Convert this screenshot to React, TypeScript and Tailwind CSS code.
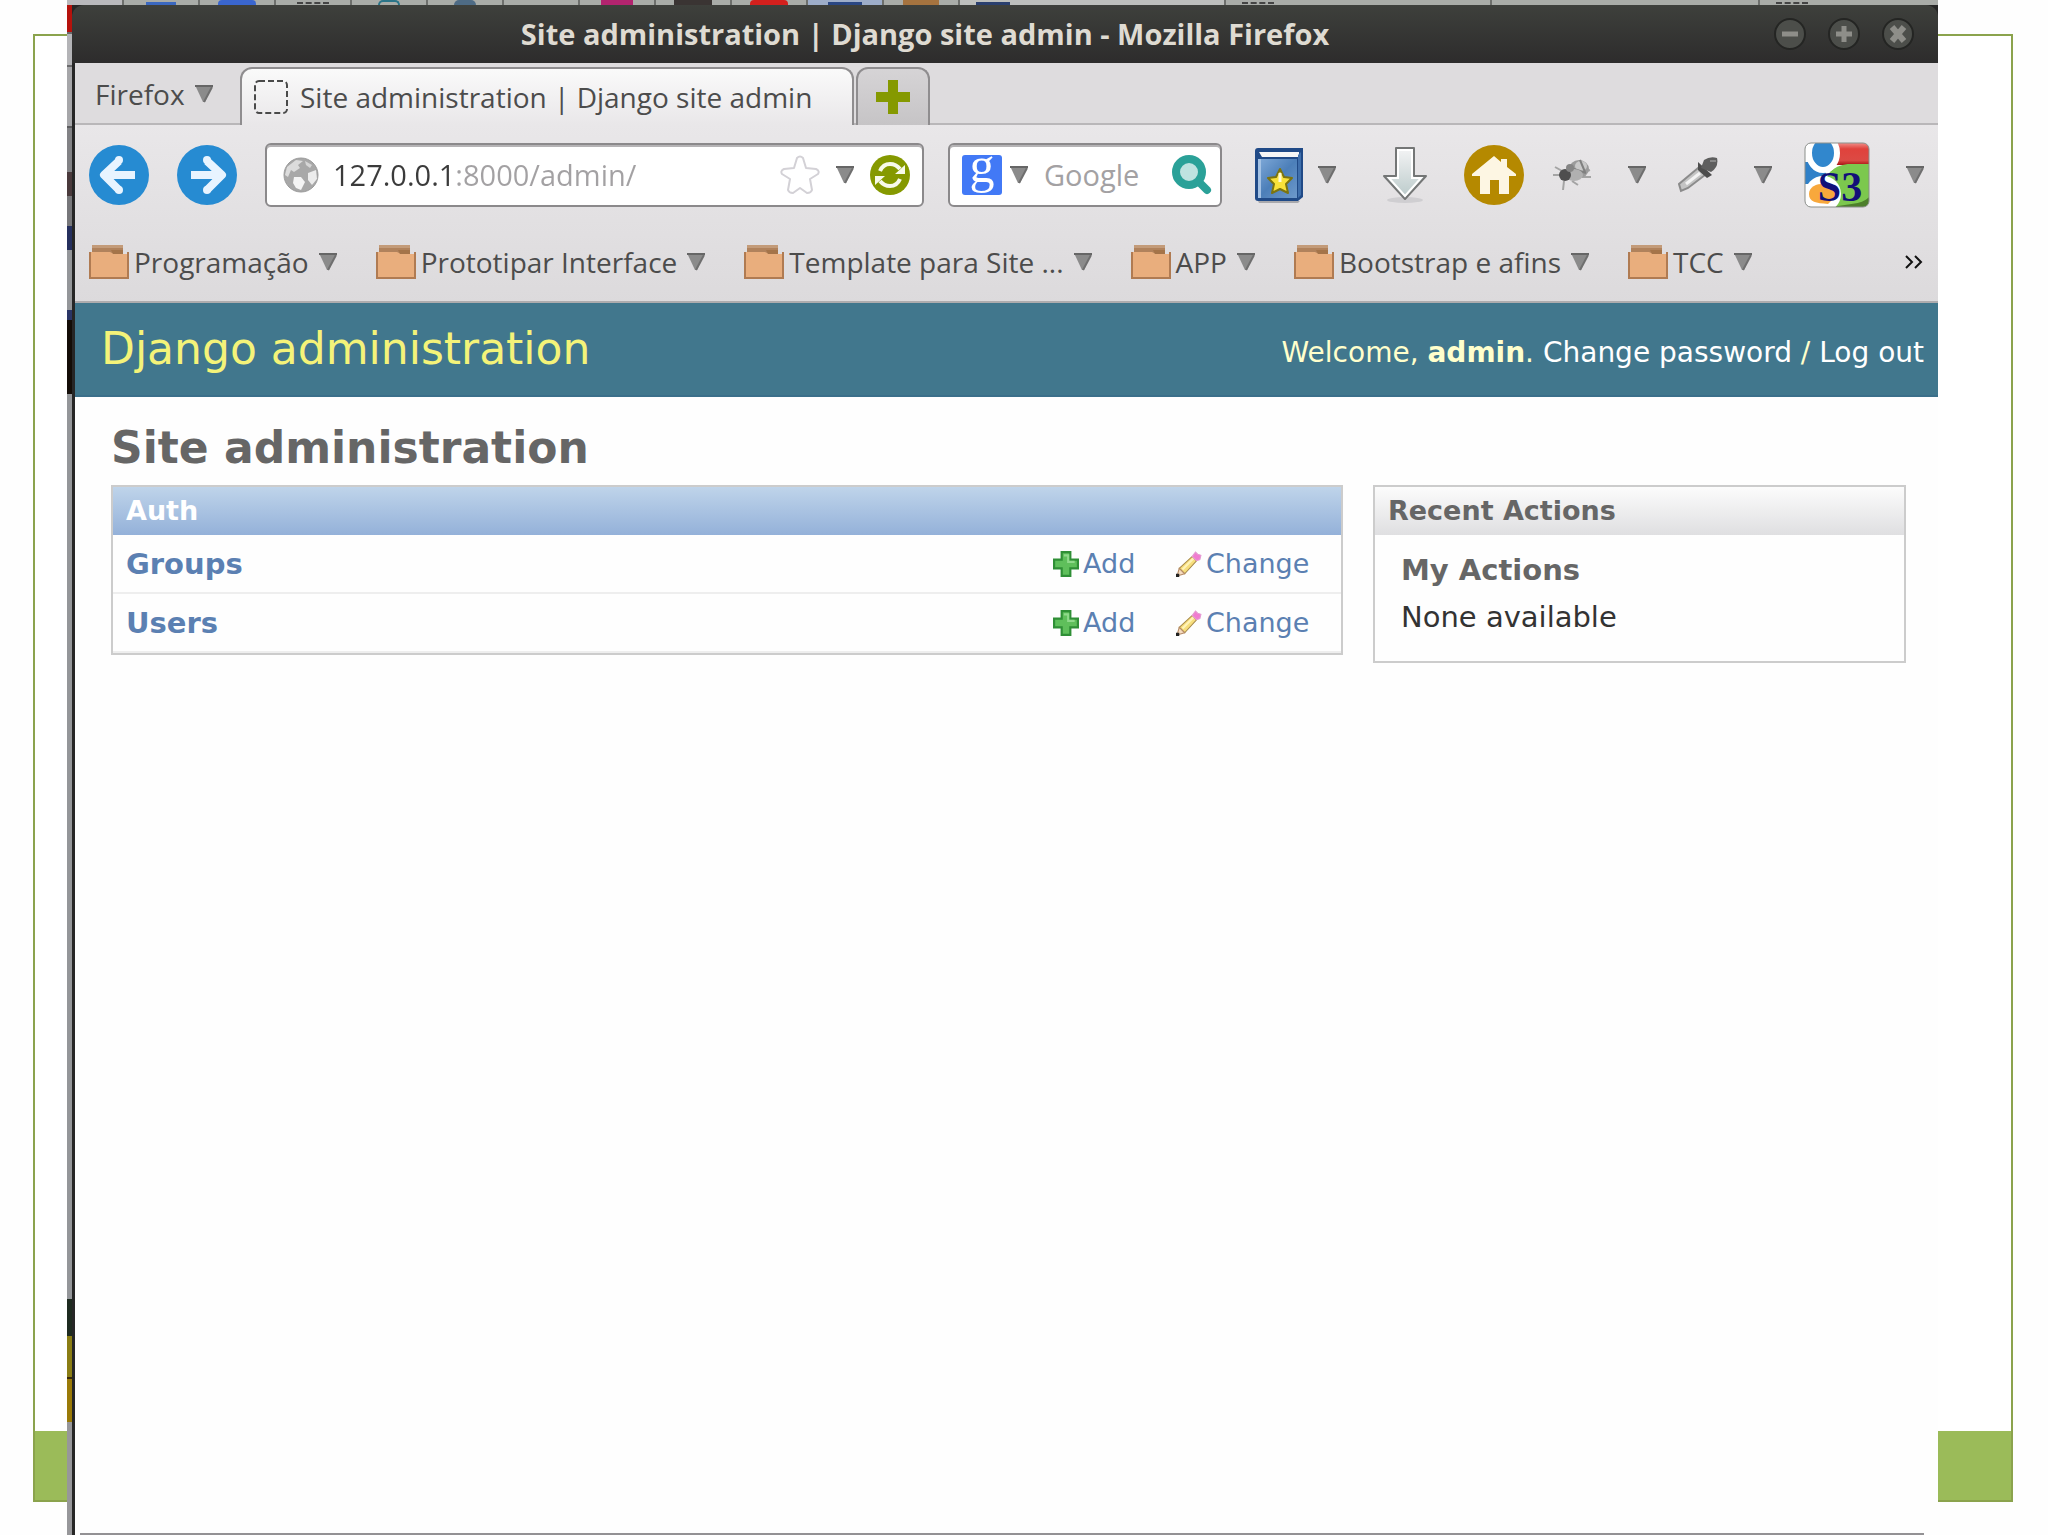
import React from 'react';

interface IconProps {
  className?: string;
}

const bookmarks = ['Programação', 'Prototipar Interface', 'Template para Site ...', 'APP', 'Bootstrap e afins', 'TCC'];

const models = ['Groups', 'Users'];

const Triangle: React.FC = () => (
  <svg viewBox="0 0 18 18" className="w-[18px] h-[18px] shrink-0" aria-hidden="true">
    <path d="M0 0H18L10 17H8Z" fill="#8b8b8b" />
    <path d="M0 0H18V2H0Z" fill="#666" />
    <path d="M17 2L9 17" stroke="#6f6f6f" strokeWidth="2" />
  </svg>
);

const ArrowCircle: React.FC<{ flip?: boolean }> = ({ flip = false }) => (
  <svg viewBox="0 0 60 60" className="w-[60px] h-[60px]" aria-hidden="true">
    <circle cx="30" cy="30" r="30" fill="#268bd2" />
    <path
      d={flip ? 'M14 30H46M30 16L45 30L30 45' : 'M46 30H14M30 16L15 30L30 45'}
      fill="none"
      stroke="#e8f4ff"
      strokeWidth="8"
      strokeLinecap="butt"
      strokeLinejoin="round"
    />
    <circle cx="30" cy="15" r="4" fill="#e8f4ff" />
    <circle cx="30" cy="45" r="4" fill="#e8f4ff" />
  </svg>
);

const GlobeIcon: React.FC = () => (
  <svg viewBox="0 0 36 36" className="w-9 h-9 shrink-0" aria-hidden="true">
    <circle cx="18" cy="18" r="17" fill="#a8a8a8" />
    <path d="M4 10L13 3L20 4L15 8L17 11L11 15L8 13L5 20L2 18Z" fill="#dcdcdc" />
    <path d="M11 20L18 20L22 25L18 33L13 31L10 26Z" fill="#f4f4f4" />
    <path d="M25 16L33 13L34 22L29 28L25 23Z" fill="#ececec" />
    <path d="M22 4L29 8L27 11L23 8Z" fill="#d6d6d6" />
    <circle cx="18" cy="18" r="17" fill="none" stroke="#9b9b9b" />
  </svg>
);

const StarIcon: React.FC = () => (
  <svg viewBox="0 0 40 40" className="w-10 h-10" aria-hidden="true">
    <path
      d="M17 3Q20 0 23 3L26 13L36 14Q40 16 38 19L30 24L32 35Q31 38 27 38L20 33L13 38Q9 38 8 35L10 24L2 19Q0 16 4 14L14 13Z"
      fill="#fff"
      stroke="#d3d1d6"
      strokeWidth="2"
      strokeLinejoin="round"
    />
  </svg>
);

const ReloadIcon: React.FC = () => (
  <svg viewBox="0 0 40 40" className="w-10 h-10" aria-hidden="true">
    <circle cx="20" cy="20" r="20" fill="#859900" />
    <path d="M10 16Q13 9 20 9Q26 9 30 14M30 24Q27 31 20 31Q14 31 10 26" fill="none" stroke="#f7faea" strokeWidth="4" />
    <path d="M35 10V19H25ZM5 30V21H15Z" fill="#f7faea" />
  </svg>
);

const GoogleIcon: React.FC = () => (
  <svg viewBox="0 0 40 40" className="w-10 h-10 overflow-visible" aria-hidden="true">
    <rect width="40" height="40" rx="3" fill="#4279f6" />
    <text x="20" y="27" textAnchor="middle" fontSize="50" fill="#fff" fontFamily="Liberation Serif, serif">
      g
    </text>
  </svg>
);

const SearchIcon: React.FC = () => (
  <svg viewBox="0 0 40 40" className="w-10 h-10" aria-hidden="true">
    <path d="M26 26L35 35" stroke="#2aa198" strokeWidth="8" strokeLinecap="round" />
    <circle cx="17" cy="17" r="13" fill="#bfe3e0" stroke="#2aa198" strokeWidth="8" />
  </svg>
);

const BookIcon: React.FC = () => (
  <svg viewBox="0 0 50 56" className="w-[50px] h-14" aria-hidden="true">
    <defs>
      <linearGradient id="book" x1="0" y1="0" x2="1" y2="1">
        <stop offset="0" stopColor="#7fa9d8" />
        <stop offset="0.5" stopColor="#4c7fb9" />
        <stop offset="1" stopColor="#6d99cb" />
      </linearGradient>
    </defs>
    <path d="M4 54H46L44 56H5Z" fill="#a9a9ad" />
    <path d="M1 4Q1 1 4 1H49V50L44 54H4Q1 54 1 51Z" fill="#204a87" />
    <path d="M5 5H45V10H8Z" fill="#f6f6f6" />
    <path d="M4 12H43V51H4Z" fill="url(#book)" />
    <path d="M4 12H7V51H4Z" fill="#a4c2e4" />
    <path d="M44 8L47 5V48L44 51Z" fill="#3f6fac" />
    <path d="M26 22L30 30L38 31L32 37L34 46L26 42L18 46L20 37L14 31L22 30Z" fill="#f8e13a" stroke="#7c7410" strokeWidth="2" strokeLinejoin="round" />
    <path d="M26 26V35" stroke="#fffbd5" strokeWidth="3" />
  </svg>
);

const DownloadIcon: React.FC = () => (
  <svg viewBox="0 0 46 58" className="w-[46px] h-[58px]" aria-hidden="true">
    <defs>
      <linearGradient id="down" x1="0" y1="0" x2="0" y2="1">
        <stop offset="0" stopColor="#f4f4f5" />
        <stop offset="1" stopColor="#b9c9c9" />
      </linearGradient>
    </defs>
    <ellipse cx="23" cy="54" rx="18" ry="3" fill="#cfced1" />
    <path d="M14 2H32V30H44L23 53L2 30H14Z" fill="url(#down)" stroke="#747676" strokeWidth="2" strokeLinejoin="round" />
    <path d="M16 4H30V32H39L23 50L7 32H16Z" fill="none" stroke="#fff" strokeWidth="2" />
  </svg>
);

const HomeIcon: React.FC = () => (
  <svg viewBox="0 0 60 60" className="w-[60px] h-[60px]" aria-hidden="true">
    <circle cx="30" cy="30" r="30" fill="#b58900" />
    <path d="M30 11L37 17V14H43V22L52 29V31H45V49H35V35H26V49H16V31H8V29Z" fill="#fdf6e3" />
  </svg>
);

const BugIcon: React.FC = () => (
  <svg viewBox="0 0 40 36" className="w-10 h-9" aria-hidden="true">
    <path d="M1 18H11M3 10L12 15M12 24L11 33M20 24L26 28M30 20L39 20M32 15L38 13" stroke="#a4a4a4" strokeWidth="2" />
    <ellipse cx="27" cy="12" rx="10" ry="9" fill="#9b9b9b" />
    <ellipse cx="29" cy="9" rx="6" ry="5" fill="#c9c9c9" />
    <path d="M19 11L34 16M28 3L33 15" stroke="#808080" strokeWidth="2" />
    <ellipse cx="22" cy="18" rx="9" ry="6" fill="#b0b0b0" />
    <circle cx="13" cy="18" r="6" fill="#4e4e4e" />
    <circle cx="18" cy="11" r="4" fill="#858585" />
  </svg>
);

const DropperIcon: React.FC = () => (
  <svg viewBox="0 0 40 40" className="w-10 h-10" aria-hidden="true">
    <path d="M20 13L27 20L10 33L3 36L1 29Z" fill="#c4c4c4" stroke="#8b8b8b" strokeWidth="2" />
    <path d="M8 29L22 18" stroke="#f3f3f3" strokeWidth="3" />
    <path d="M20 7L34 20L29 23L20 15Z" fill="#4d4d4d" />
    <path d="M26 5Q32 1 39 3Q41 12 33 17L23 13Z" fill="#5e5e5e" />
    <path d="M32 6L38 6" stroke="#888" strokeWidth="2" />
  </svg>
);

const S3Icon: React.FC = () => (
  <svg viewBox="0 0 66 66" className="w-[66px] h-[66px] overflow-visible" aria-hidden="true">
    <defs>
      <clipPath id="s3">
        <rect x="1" y="1" width="64" height="64" rx="6" />
      </clipPath>
      <linearGradient id="s3red" x1="0" y1="0" x2="0" y2="1">
        <stop offset="0" stopColor="#f39a94" />
        <stop offset="0.3" stopColor="#e0423c" />
        <stop offset="0.8" stopColor="#dc4a44" />
        <stop offset="1" stopColor="#a81614" />
      </linearGradient>
    </defs>
    <g clipPath="url(#s3)">
      <rect width="66" height="66" fill="#fff" />
      <path d="M0 20H20L22 32L12 42H0Z" fill="#2f80c8" />
      <rect x="30" width="36" height="23" fill="url(#s3red)" />
      <path d="M20 40L26 30C32 24 40 22 46 22H66V66H28Z" fill="#7cc84e" />
      <path d="M26 66C40 61 58 64 66 54V66Z" fill="#4d7f2b" />
      <ellipse cx="19" cy="11" rx="14" ry="17" fill="#3187cd" stroke="#fff" strokeWidth="6" />
      <circle cx="19" cy="52" r="18" fill="#fff" />
      <path d="M5 52C5 44 14 41 24 42L34 52L24 62C12 61 5 60 5 52Z" fill="#f8a83c" />
    </g>
    <rect x="1" y="1" width="64" height="64" rx="6" fill="none" stroke="#8b8f8b" />
    <text x="36" y="59" textAnchor="middle" fontSize="42" fontWeight="bold" fill="#120f78" fontFamily="Liberation Serif, serif">
      S3
    </text>
  </svg>
);

const FolderIcon: React.FC = () => (
  <svg viewBox="0 0 40 36" className="w-10 h-9 shrink-0" aria-hidden="true">
    <path d="M3 1H34V10H3Z" fill="#b0825c" />
    <path d="M3 1H34V4H3Z" fill="#c39b79" />
    <path d="M1 8H21L25 10H39V34H1Z" fill="#e9ae7d" />
    <path d="M1 8V34H39V8" fill="none" stroke="#b07b52" strokeWidth="2" />
    <path d="M22 6H34V10H24Z" fill="#a47449" />
  </svg>
);

const PlusIcon: React.FC<IconProps> = ({ className = '' }) => (
  <svg viewBox="0 0 24 24" className={className} aria-hidden="true">
    <path d="M8 1H16V8H23V16H16V23H8V16H1V8H8Z" fill="#5fbf5b" stroke="#2f8f36" strokeWidth="2" />
    <path d="M10 4H14V10H20" fill="none" stroke="#8fd98a" strokeWidth="2" />
  </svg>
);

const PencilIcon: React.FC<IconProps> = ({ className = '' }) => (
  <svg viewBox="0 0 24 24" className={className} aria-hidden="true">
    <path d="M3 16L15 5L19 9L8 21Z" fill="#f7de7c" stroke="#a88a4a" />
    <path d="M6 17L16 7" stroke="#fff3b8" strokeWidth="2" />
    <path d="M3 16L8 21L1 23Z" fill="#f6dcc0" stroke="#b58a64" />
    <path d="M0 21H3V24H0Z" fill="#222" />
    <path d="M15 5L18 1L20 3L23 4L22 8L19 9Z" fill="#f07cd0" stroke="#e59ad3" />
  </svg>
);

// Bottom edge of the panel that is hidden behind the browser window
const BackPanel: React.FC = () => (
  <div className="flex h-[5px] overflow-hidden bg-[#a9aca8]" aria-hidden="true">
    <div className="w-[57px] bg-[#b9b9bc] border-r-2 border-[#6d6f6c]" />
    <div className="flex w-[76px] justify-center border-r-2 border-[#6d6f6c]"><span className="mt-0.5 w-[30px] bg-[#3b68c0]" /></div>
    <div className="flex w-[76px] justify-center border-r-2 border-[#6d6f6c]"><span className="w-[38px] rounded-t-sm bg-[#3a66cf]" /></div>
    <div className="flex w-[76px] justify-center border-r-2 border-[#6d6f6c]"><span className="mt-0.5 w-[32px] border-t-2 border-dashed border-[#444]" /></div>
    <div className="flex w-[76px] justify-center border-r-2 border-[#6d6f6c]"><span className="w-[22px] rounded-t-full border-2 border-b-0 border-[#2a7488]" /></div>
    <div className="flex w-[76px] justify-center border-r-2 border-[#6d6f6c]"><span className="w-[22px] rounded-t-full bg-[#4e6b85]" /></div>
    <div className="w-[76px] border-r-2 border-[#6d6f6c]" />
    <div className="flex w-[76px] justify-center border-r-2 border-[#6d6f6c]"><span className="w-[32px] bg-[#b3246f]" /></div>
    <div className="flex w-[76px] justify-center border-r-2 border-[#6d6f6c]"><span className="w-[38px] bg-[#3a3433]" /></div>
    <div className="flex w-[76px] justify-center border-r-2 border-[#6d6f6c]"><span className="w-[38px] rounded-t-sm bg-[#d3201d]" /></div>
    <div className="flex w-[76px] justify-center border-r-2 border-[#6d6f6c] bg-[#9dadc9]"><span className="mt-0.5 w-[34px] bg-[#2a4784]" /></div>
    <div className="flex w-[76px] justify-center border-r-2 border-[#6d6f6c]"><span className="w-[36px] bg-[#a5733f]" /></div>
    <div className="flex w-[266px] border-r-2 border-[#6d6f6c] bg-[#bdbfbd] pl-4"><span className="mt-0.5 w-[34px] bg-[#2a3f6e]" /></div>
    <div className="flex w-[266px] border-r-2 border-[#6d6f6c] pl-4"><span className="mt-0.5 w-[32px] border-t-2 border-dashed border-[#444]" /></div>
    <div className="w-[268px] border-r-2 border-[#6d6f6c]" />
    <div className="flex flex-1 pl-4"><span className="mt-0.5 w-[32px] border-t-2 border-dashed border-[#444]" /></div>
  </div>
);

const BackEdge: React.FC = () => (
  <div className="flex w-[5px] shrink-0 flex-col bg-[#949699]" aria-hidden="true">
    <div className="h-[27px] bg-[#b5120c]" />
    <div className="h-[35px] border-y-2 border-[#6a6a6c] bg-[#b4b4b7]" />
    <div className="h-[61px] border-b-2 border-[#5c5c5e] bg-[#a6a6a9]" />
    <div className="h-[44px] bg-[#828285]" />
    <div className="h-[24px] bg-[#4a3a3c]" />
    <div className="h-[30px] bg-[#77777a]" />
    <div className="h-[24px] bg-[#26305e]" />
    <div className="h-[60px]" />
    <div className="h-[10px] bg-[#2a3566]" />
    <div className="h-[74px] bg-[#140d08]" />
    <div className="flex-1" />
    <div className="h-[37px] bg-[#1e2b20]" />
    <div className="h-[43px] border-b-2 border-[#3a2a08] bg-[#8a7d14]" />
    <div className="h-[43px] bg-[#9a7a08]" />
    <div className="h-[113px] bg-[#97979a]" />
  </div>
);

const TitleBar: React.FC = () => (
  <header className="flex h-[58px] items-center rounded-t-xl bg-linear-to-b from-[#3e403c] to-[#2d2c2c] pr-6">
    <h1 className="flex-1 pl-1 text-center text-[29px] leading-10 font-bold text-[#dfdbd2]">
      Site administration | Django site admin - Mozilla Firefox
    </h1>
    <div className="flex gap-[22px]">
      {['Minimize', 'Maximize', 'Close'].map((name) => (
        <button key={name} type="button" aria-label={name} className="size-8 rounded-full border-2 border-[#242523] bg-[#4c4e4a]">
          <svg viewBox="0 0 28 28" className="size-7" aria-hidden="true">
            {name === 'Minimize' && <path d="M6 14H22" stroke="#8e8e89" strokeWidth="5" />}
            {name === 'Maximize' && <path d="M6 14H22M14 6V22" stroke="#8e8e89" strokeWidth="5" />}
            {name === 'Close' && <path d="M8 7L20 21M20 7L8 21" stroke="#8e8e89" strokeWidth="6" />}
          </svg>
        </button>
      ))}
    </div>
  </header>
);

const TabStrip: React.FC = () => (
  <div className="flex h-[62px] items-stretch bg-[#dedcde] shadow-[inset_0_-2px_0_#b9b7b9]">
    <button type="button" className="flex w-[165px] items-center gap-2.5 pl-5">
      Firefox
      <Triangle />
    </button>
    <div role="tab" aria-selected="true" className="mt-1 flex w-[614px] items-center gap-3 rounded-t-xl border-x-2 border-t-2 border-[#8f8d8f] bg-linear-to-b from-[#fafafa] to-[#e9e7e9] pl-3">
      <svg viewBox="0 0 34 34" className="size-[34px]" aria-hidden="true">
        <rect x="1" y="1" width="32" height="32" rx="4" fill="none" stroke="#4a4a4a" strokeWidth="2" strokeDasharray="6 3" />
      </svg>
      Site administration | Django site admin
    </div>
    <button type="button" aria-label="New tab" className="mt-1 ml-0.5 flex w-[74px] items-center justify-center rounded-t-xl border-2 border-b-0 border-[#8f8d8f] bg-linear-to-b from-[#d6d4d6] to-[#c6c4c6]">
      <svg viewBox="0 0 34 34" className="size-[34px]" aria-hidden="true">
        <path d="M12 0H22V12H34V22H22V34H12V22H0V12H12Z" fill="#859900" />
      </svg>
    </button>
  </div>
);

const Toolbar: React.FC = () => (
  <div className="flex h-[100px] items-center px-3.5 text-[29px]">
    <button type="button" aria-label="Back"><ArrowCircle /></button>
    <button type="button" aria-label="Forward" className="ml-7"><ArrowCircle flip /></button>

    <div className="ml-7 flex h-16 flex-1 items-center rounded-md border-2 border-[#8b898b] bg-white pl-4 pr-3 shadow-[inset_0_2px_0_#b5b3b5]">
      <GlobeIcon />
      <input
        type="text"
        aria-label="Address"
        defaultValue="127.0.0.1:8000/admin/"
        className="ml-3.5 min-w-0 flex-1 bg-linear-to-r from-[#3b3b3b] from-[122px] to-[#a3a1a3] to-[122px] bg-clip-text text-transparent outline-none"
      />
      <button type="button" aria-label="Bookmark this page"><StarIcon /></button>
      <button type="button" aria-label="Show history" className="ml-4"><Triangle /></button>
      <button type="button" aria-label="Reload" className="ml-4"><ReloadIcon /></button>
    </div>

    <div className="ml-6 flex h-16 w-[274px] items-center rounded-md border-2 border-[#8b898b] bg-white pl-3 pr-2 shadow-[inset_0_2px_0_#b5b3b5]">
      <button type="button" aria-label="Search engine" className="flex items-center gap-2">
        <GoogleIcon />
        <Triangle />
      </button>
      <input type="text" aria-label="Search" placeholder="Google" className="ml-4 min-w-0 flex-1 placeholder-[#a3a1a3] outline-none" />
      <button type="button" aria-label="Search Google"><SearchIcon /></button>
    </div>

    <button type="button" aria-label="Bookmarks" className="ml-8 flex items-center gap-3.5">
      <BookIcon />
      <Triangle />
    </button>
    <button type="button" aria-label="Downloads" className="ml-[46px]"><DownloadIcon /></button>
    <button type="button" aria-label="Home" className="ml-9"><HomeIcon /></button>
    <button type="button" aria-label="Inspect" className="ml-7 flex items-center gap-9">
      <BugIcon />
      <Triangle />
    </button>
    <button type="button" aria-label="Pick a colour" className="ml-8 flex items-center gap-9">
      <DropperIcon />
      <Triangle />
    </button>
    <button type="button" aria-label="S3 search" className="ml-8 flex items-center gap-9">
      <S3Icon />
      <Triangle />
    </button>
  </div>
);

const BookmarksBar: React.FC = () => (
  <nav className="flex h-[78px] items-center gap-[39px] border-b-2 border-[#aeacae] pb-0.5 pl-3.5 pr-3.5">
    {bookmarks.map((name) => (
      <button key={name} type="button" className="flex items-center whitespace-nowrap">
        <FolderIcon />
        <span className="ml-[5px] mr-2.5">{name}</span>
        <Triangle />
      </button>
    ))}
    <button type="button" aria-label="More bookmarks" className="ml-auto">
      <svg viewBox="0 0 20 14" className="w-5 h-3.5" aria-hidden="true">
        <path d="M2 1L8 7L2 13M11 1L17 7L11 13" fill="none" stroke="#111" strokeWidth="2" />
      </svg>
    </button>
  </nav>
);

const AdminPage: React.FC = () => (
  <div className="font-['DejaVu_Sans',sans-serif]">
    <div className="flex h-[94px] items-center justify-between border-b-2 border-[#3b6f8a] bg-[#41778d] pl-[26px] pr-3.5">
      <h2 className="text-[44px] leading-[52px] text-[#f4f379]">Django administration</h2>
      <div className="pt-2 text-[28px] leading-8 text-[#ffffcc]">
        Welcome, <strong>admin</strong>. <a href="#password" className="text-white">Change password</a> /{' '}
        <a href="#logout" className="text-white">Log out</a>
      </div>
    </div>

    <main className="pt-[25px] pl-9 pr-8">
      <h2 className="mb-[11px] text-[44px] leading-[52px] font-bold text-[#666]">Site administration</h2>
      <div className="flex items-start gap-[30px]">
        <table className="flex-1 border-separate border-spacing-0 border-2 border-[#ccc]">
          <caption className="hidden">Auth</caption>
          <colgroup>
            <col />
            <col className="w-[123px]" />
            <col className="w-[165px]" />
          </colgroup>
          <thead>
            <tr>
              <th colSpan={3} className="h-12 bg-linear-to-b from-[#bfd4ea] to-[#94b1d9] px-[13px] text-left text-[27px] leading-8 text-white">
                Auth
              </th>
            </tr>
          </thead>
          <tbody className="text-[#5b80b2]">
            {models.map((model) => (
              <tr key={model} className="h-[59px]">
                <th scope="row" className="border-b-2 border-[#eee] px-[13px] text-left text-[29px] leading-9">
                  <a href={`#${model}`}>{model}</a>
                </th>
                <td className="border-b-2 border-[#eee] text-[27px] leading-8">
                  <a href={`#add-${model}`} className="flex items-center gap-1">
                    <PlusIcon className="size-[26px]" />
                    Add
                  </a>
                </td>
                <td className="border-b-2 border-[#eee] text-[27px] leading-8">
                  <a href={`#change-${model}`} className="flex items-center gap-1">
                    <PencilIcon className="size-[26px]" />
                    Change
                  </a>
                </td>
              </tr>
            ))}
          </tbody>
        </table>

        <aside className="w-[533px] border-2 border-[#ccc] pb-5">
          <h3 className="h-12 bg-linear-to-b from-[#fcfcfc] to-[#dfdfe1] px-[13px] py-2 text-[27px] leading-8 font-bold text-[#666]">
            Recent Actions
          </h3>
          <div className="px-[26px] pt-3 text-[29px] leading-[47px]">
            <h4 className="font-bold text-[#666]">My Actions</h4>
            <p className="text-[#333]">None available</p>
          </div>
        </aside>
      </div>
    </main>
  </div>
);

export default function App() {
  return (
    <div className="relative flex min-h-screen flex-col bg-[#fefefe]">
      {/* Slide frame behind the window */}
      <div className="absolute top-[34px] right-[35px] bottom-[33px] left-[33px] flex flex-col justify-end border-2 border-[#8ba34d] bg-white" aria-hidden="true">
        <div className="h-[69px] bg-[#9bbb59]" />
      </div>

      <div className="relative ml-[67px] mr-[110px] flex flex-1 flex-col">
        <BackPanel />
        <div className="flex flex-1 bg-white">
          <BackEdge />
          <div className="flex min-w-0 flex-1 flex-col bg-[#262626] font-['Open_Sans',sans-serif] text-[28px] leading-10 text-[#4c4c4c]">
            <TitleBar />
            <div className="ml-[3px] flex flex-1 flex-col bg-[#fefefe]">
              <TabStrip />
              <div className="bg-linear-to-b from-[#e9e7e9] to-[#dcdadc]">
                <Toolbar />
                <BookmarksBar />
              </div>
              <AdminPage />
              <div className="mt-auto ml-[5px] mr-3.5 h-0.5 bg-[#939194]" />
            </div>
          </div>
        </div>
      </div>
    </div>
  );
}
